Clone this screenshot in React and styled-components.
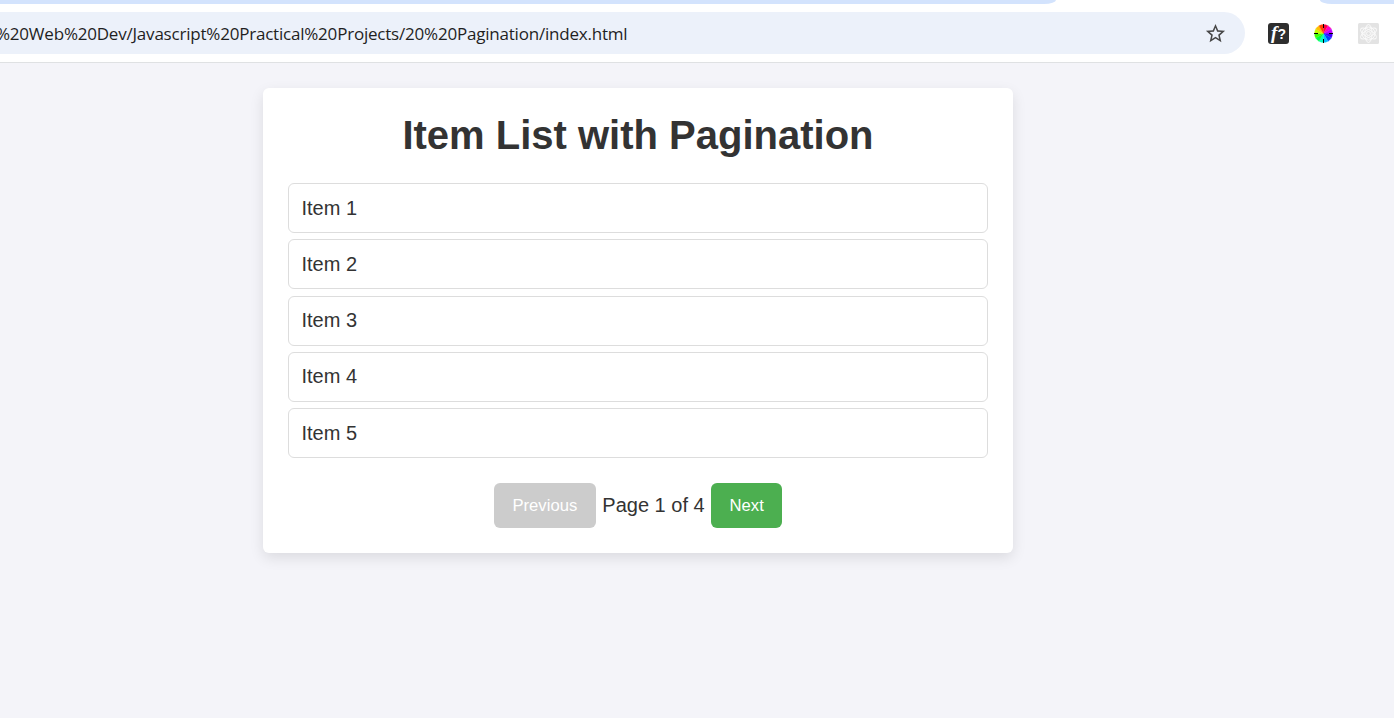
import React from "react";
import styled, { createGlobalStyle } from "styled-components";

const GlobalStyle = createGlobalStyle`
  * { box-sizing: border-box; }
  body {
    margin: 0;
    overflow: hidden;
    background: #f4f4f9;
    color: #333;
    font-family: Arial, "Liberation Sans", sans-serif;
    font-size: 20px;
  }
`;

const Screen = styled.div`
  height: 718px;
  overflow: hidden;
  display: flex;
  flex-direction: column;
`;

const Browser = styled.header`
  height: 63px;
  flex: none;
  background: #fff;
  border-bottom: 1px solid #dfe1e3;
`;

const TabStrip = styled.div`
  height: 12px;
  display: flex;
  justify-content: space-between;
`;

const TabEdge = styled.div`
  width: ${(p) => p.$width}px;
  height: 4px;
  background: #d3e3fd;
  border-radius: ${(p) => (p.$side === "left" ? "0 0 12px 0 / 0 0 4px 0" : "0 0 0 12px / 0 0 0 4px")};
`;

const Toolbar = styled.div`
  display: flex;
  align-items: center;
`;

const AddressBar = styled.div`
  width: 1245px;
  height: 42px;
  padding-right: 18px;
  border-radius: 0 21px 21px 0;
  background: #ecf1fa;
  display: flex;
  align-items: center;
  justify-content: space-between;
`;

const Url = styled.span`
  margin-left: -4px;
  padding-top: 1px;
  color: #1f1f1f;
  font-family: "Open Sans", sans-serif;
  font-size: 17px;
  line-height: 24px;
  letter-spacing: -0.21px;
  white-space: nowrap;
`;

const Extensions = styled.div`
  display: flex;
  align-items: center;
  gap: 24px;
  padding-left: 23px;
`;

const Icon = styled.svg`
  display: block;
  flex: none;
`;

const FontBadge = styled.span`
  width: 21px;
  height: 21px;
  border-radius: 3px;
  background: #2e2e2e;
  color: #fff;
  font: italic bold 19px/19px "Liberation Serif", serif;
  display: flex;
  justify-content: center;
`;

const Question = styled.span`
  font: bold 14px/22px "Liberation Sans", sans-serif;
`;

const Page = styled.main`
  padding: 25px 0 0 263px;
`;

const Card = styled.section`
  width: 750px;
  height: 465px;
  padding: 25px;
  border-radius: 6px;
  background: #fff;
  box-shadow: 0 5px 14px rgba(0, 0, 0, 0.1);
`;

const Title = styled.h1`
  margin: 0 0 25px;
  font-size: 40px;
  line-height: 45px;
  text-align: center;
`;

const List = styled.ul`
  margin: 0;
  padding: 0;
  list-style: none;
  display: flex;
  flex-direction: column;
  gap: 6.25px;
`;

const Item = styled.li`
  height: 50px;
  padding: 12.5px;
  border: 1px solid #ddd;
  border-radius: 6px;
  line-height: 23px;
`;

const Pagination = styled.nav`
  margin-top: 25px;
  display: flex;
  justify-content: center;
  align-items: center;
  gap: 6.5px;
`;

const PageButton = styled.button`
  width: ${(p) => p.$width}px;
  height: 45px;
  padding: 0;
  border: 0;
  border-radius: 6px;
  color: #fff;
  background: ${(p) => (p.disabled ? "#ccc" : "#4caf50")};
  font: 16.67px/20px "Liberation Sans", sans-serif;
`;

const wheel = Array.from({ length: 12 }, (_, i) => {
  const point = (deg) => {
    const a = (deg * Math.PI) / 180;
    return `${10.5 + 9 * Math.sin(a)} ${10.5 - 9 * Math.cos(a)}`;
  };
  return {
    d: `M10.5 10.5 L${point(i * 30)} A9 9 0 0 1 ${point(i * 30 + 30)}Z`,
    fill: `hsl(${(345 - i * 30 + 360) % 360} 100% 50%)`,
  };
});

function ColorWheel() {
  return (
    <Icon width="21" height="21" viewBox="0 0 21 21">
      {wheel.map((w) => (
        <path key={w.d} d={w.d} fill={w.fill} stroke={w.fill} strokeWidth="0.3" />
      ))}
      <path d="M10.5 1v4M10.5 16v4M1 10.5h4M16 10.5h4" stroke="#000" strokeWidth="1" />
    </Icon>
  );
}

function Atom() {
  return (
    <Icon width="21" height="21" viewBox="0 0 21 21">
      <rect width="21" height="21" rx="1.5" fill="#e3e3e3" />
      <g fill="none" stroke="#fafafa" strokeWidth="0.9">
        {[30, 90, 150].map((r) => (
          <ellipse key={r} cx="10.5" cy="10.5" rx="9" ry="3.6" transform={`rotate(${r} 10.5 10.5)`} />
        ))}
        <circle cx="10.5" cy="10.5" r="2" />
        <circle cx="10.5" cy="10.5" r="6.5" />
      </g>
    </Icon>
  );
}

export default function App() {
  return (
    <Screen>
      <GlobalStyle />
      <Browser>
        <TabStrip>
          <TabEdge $width={1056} $side="left" />
          <TabEdge $width={74} $side="right" />
        </TabStrip>
        <Toolbar>
          <AddressBar>
            <Url>%20Web%20Dev/Javascript%20Practical%20Projects/20%20Pagination/index.html</Url>
            <Icon width="23" height="23" viewBox="0 0 24 24" fill="#474747">
              <path d="M22 9.24l-7.19-.62L12 2 9.19 8.63 2 9.24l5.46 4.73L5.82 21 12 17.27 18.18 21l-1.63-7.03L22 9.24zM12 15.4l-3.76 2.27 1-4.28-3.32-2.88 4.38-.38L12 6.1l1.71 4.04 4.38.38-3.32 2.88 1 4.28L12 15.4z" />
            </Icon>
          </AddressBar>
          <Extensions>
            <FontBadge>
              f<Question>?</Question>
            </FontBadge>
            <ColorWheel />
            <Atom />
          </Extensions>
        </Toolbar>
      </Browser>
      <Page>
        <Card>
          <Title>Item List with Pagination</Title>
          <List>
            {[1, 2, 3, 4, 5].map((n) => (
              <Item key={n}>Item {n}</Item>
            ))}
          </List>
          <Pagination>
            <PageButton disabled $width={102}>Previous</PageButton>
            <span>Page 1 of 4</span>
            <PageButton $width={71}>Next</PageButton>
          </Pagination>
        </Card>
      </Page>
    </Screen>
  );
}
